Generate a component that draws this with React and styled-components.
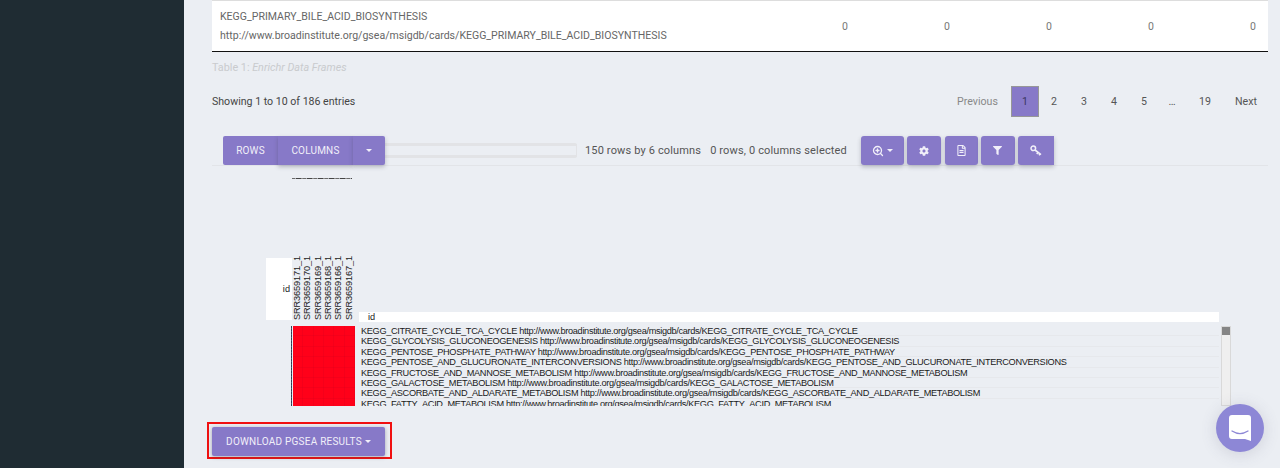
import React from 'react';
import styled, { createGlobalStyle } from 'styled-components';
import { FaCog, FaRegFileAlt, FaFilter } from 'react-icons/fa';
import { ZoomIn } from 'lucide-react';

const GlobalStyle = createGlobalStyle`
  html, body {
    margin: 0;
    padding: 0;
    height: 468px;
    overflow: hidden;
    background: #ebeef3;
  }
`;

const Page = styled.div`
  display: flex;
  width: 1280px;
  height: 468px;
  overflow: hidden;
  font-family: Roboto, "Liberation Sans", sans-serif;
  background: #ebeef3;
`;

const Sidebar = styled.aside`
  flex: 0 0 184px;
  background: #1f2c33;
`;

const Main = styled.main`
  flex: 1;
  padding: 0 12px 0 28px;
  min-width: 0;
`;

const TableRow = styled.div`
  display: flex;
  align-items: center;
  height: 50px;
  background: #fff;
  border-top: 1px solid #ddd;
  border-bottom: 1px solid #111;
  padding: 0 12px 0 8px;
`;

const RowName = styled.div`
  flex: 1;
  padding-top: 1px;
  font-size: 10.55px;
  line-height: 18.5px;
  color: #666;
`;

const ZeroCell = styled.div`
  width: 102px;
  text-align: right;
  font-size: 10.5px;
  color: #777;
`;

const Caption = styled.div`
  margin-top: 10px;
  height: 12px;
  line-height: 12px;
  font-size: 10.8px;
  color: #c9cbce;

  em {
    font-style: italic;
  }
`;

const TableFooter = styled.div`
  display: flex;
  align-items: center;
  justify-content: space-between;
  margin-top: 12px;
  height: 31px;
`;

const Showing = styled.div`
  font-size: 10.6px;
  color: #444;
`;

const Pagination = styled.div`
  display: flex;
  align-items: center;
  height: 31px;
  margin-right: 1px;
  font-size: 10.6px;
  color: #555;
`;

const PageLink = styled.span`
  display: flex;
  align-items: center;
  justify-content: center;
  box-sizing: border-box;
  height: 31px;
  width: ${(p) => p.$width || 30}px;
  color: ${(p) => (p.$muted ? '#888' : p.$active ? '#3b3560' : '#555')};
  background: ${(p) => (p.$active ? '#8779c8' : 'transparent')};
  border: ${(p) => (p.$active ? '1px solid #979797' : 'none')};
`;

const Toolbar = styled.div`
  display: flex;
  align-items: center;
  height: 29px;
  margin-top: 19px;
  padding-left: 11px;
  border-bottom: 1px solid #e2e4e8;
`;

const ToolbarGroup = styled.div`
  display: flex;
  position: relative;
  z-index: 1;
  height: 29px;
`;

const ToolButton = styled.div`
  display: flex;
  align-items: center;
  justify-content: center;
  gap: 2px;
  box-sizing: border-box;
  width: ${(p) => p.$width}px;
  height: 29px;
  margin-right: ${(p) => p.$gap || 0}px;
  background: #8779c8;
  color: #f1eff9;
  font-size: 10px;
  letter-spacing: 0.2px;
  border-radius: ${(p) => p.$radius || '3px'};
  box-shadow: ${(p) => (p.$flat ? 'none' : '0 2px 4px rgba(60, 60, 80, 0.3)')};

  svg {
    display: block;
  }
`;

const Caret = styled.span`
  display: inline-block;
  width: 0;
  height: 0;
  margin-left: ${(p) => p.$left || 0}px;
  border-left: 3.5px solid transparent;
  border-right: 3.5px solid transparent;
  border-top: 3.5px solid #f1eff9;
`;

const ProgressTrack = styled.div`
  width: 192px;
  height: 15px;
  box-sizing: border-box;
  background: #ebeef3;
  border: 1px solid #e2e3e6;
  border-top-width: 3px;
  border-bottom-width: 3px;
  border-left: none;
  border-radius: 0 2px 2px 0;
`;

const Stat = styled.span`
  font-size: 11px;
  letter-spacing: 0.15px;
  color: #555;
  margin-left: ${(p) => p.$left}px;
  white-space: nowrap;
`;

const ToolIcons = styled.div`
  display: flex;
  margin-left: 14px;
`;

const DashLine = styled.div`
  width: 60px;
  height: 1px;
  margin: 12px 0 0 80px;
  background: repeating-linear-gradient(90deg, #6a6a6a 0 3px, #a9adb2 3px 4px, #444 4px 9px, #8a8a8a 9px 11px);
`;

const Heatmap = styled.div`
  display: grid;
  grid-template-columns: 26px 67px 860px 12px;
  grid-template-rows: 54px 14px 80px;
  margin: 79px 0 0 54px;
`;

const CornerLabel = styled.div`
  grid-row: 1 / 3;
  height: 62px;
  background: #fff;
  display: flex;
  align-items: center;
  justify-content: flex-end;
  padding-right: 2px;
  font-family: "Liberation Sans", sans-serif;
  font-size: 9.2px;
  color: #222;
`;

const ColumnLabels = styled.div`
  grid-row: 1 / 3;
  display: flex;
  height: 62px;
  width: 62px;
`;

const ColumnLabel = styled.div`
  width: 10.33px;
  writing-mode: vertical-rl;
  transform: rotate(180deg);
  font-family: "Liberation Sans", sans-serif;
  font-size: 9.2px;
  letter-spacing: -0.12px;
  line-height: 10.33px;
  color: #222;
  white-space: nowrap;
`;

const IdHeader = styled.div`
  grid-row: 1 / 3;
  align-self: end;
  height: 10px;
  margin-bottom: 4px;
  padding-left: 9px;
  background: #fff;
  font-family: "Liberation Sans", sans-serif;
  font-size: 9.2px;
  line-height: 10px;
  color: #222;
`;

const HeaderSpacer = styled.div`
  grid-row: 1 / 3;
`;

const HeatCell = styled.div`
  grid-column: 1 / 3;
  display: flex;
  height: 80px;
  padding-left: 25px;
`;

const HeatBar = styled.div`
  width: 1px;
  height: 80px;
  margin-right: 1px;
  background: repeating-linear-gradient(180deg, #2f3c55 0 2px, #4a5673 2px 3px);
`;

const HeatBlock = styled.div`
  width: 62px;
  height: 80px;
  background-color: #ff0019;
  background-image:
    repeating-linear-gradient(90deg, transparent 0 9.3px, rgba(200, 0, 30, 0.18) 9.3px 10.33px),
    repeating-linear-gradient(180deg, transparent 0 9.4px, rgba(200, 0, 30, 0.18) 9.4px 10.4px);
`;

const RowList = styled.div`
  height: 80px;
  overflow: hidden;
  padding-left: 2px;
`;

const RowEntry = styled.div`
  height: 10.4px;
  line-height: 10.4px;
  box-sizing: border-box;
  border-bottom: 1px solid #e6e8ec;
  font-family: "Liberation Sans", sans-serif;
  font-size: 9.2px;
  letter-spacing: -0.33px;
  color: #1a1a1a;
  white-space: nowrap;
`;

const ScrollTrack = styled.div`
  box-sizing: border-box;
  width: 10px;
  height: 80px;
  margin-left: 2px;
  background: #efefef;
  border: 1px solid #d9d9d9;
`;

const ScrollThumb = styled.div`
  height: 8px;
  background: #858585;
`;

const DownloadOutline = styled.div`
  display: inline-block;
  box-sizing: border-box;
  margin: 16px 0 0 -5px;
  padding: 3px 5px 1px 3px;
  border: 2px solid #f01010;
`;

const DownloadButton = styled.div`
  display: flex;
  align-items: center;
  justify-content: center;
  width: 173px;
  height: 29px;
  background: #8779c8;
  color: #f1eff9;
  font-size: 10px;
  letter-spacing: 0.23px;
  border-radius: 2px;
  box-shadow: 0 1px 4px rgba(60, 60, 80, 0.4);
`;

const ChatBubble = styled.div`
  position: absolute;
  left: 1216px;
  top: 404px;
  width: 48px;
  height: 48px;
  border-radius: 50%;
  background: #8d87d6;
  display: flex;
  align-items: center;
  justify-content: center;
  box-shadow: 0 2px 16px rgba(80, 80, 110, 0.18);
`;

const KeyIcon = () => (
  <svg width="12" height="11" viewBox="0 0 12 11" fill="none" stroke="currentColor">
    <circle cx="3.3" cy="3.3" r="2.3" strokeWidth="1.5" />
    <path d="M5 5l6 4.6M8 7.3l-1.2 1.6M10 8.8l-1 1.4" strokeWidth="1.6" />
  </svg>
);

const zeros = [0, 0, 0, 0, 0];
const samples = ['SRR3659171_1', 'SRR3659170_1', 'SRR3659169_1', 'SRR3659168_1', 'SRR3659166_1', 'SRR3659167_1'];
const pathways = [
  'KEGG_CITRATE_CYCLE_TCA_CYCLE',
  'KEGG_GLYCOLYSIS_GLUCONEOGENESIS',
  'KEGG_PENTOSE_PHOSPHATE_PATHWAY',
  'KEGG_PENTOSE_AND_GLUCURONATE_INTERCONVERSIONS',
  'KEGG_FRUCTOSE_AND_MANNOSE_METABOLISM',
  'KEGG_GALACTOSE_METABOLISM',
  'KEGG_ASCORBATE_AND_ALDARATE_METABOLISM',
  'KEGG_FATTY_ACID_METABOLISM',
];
const msigdb = 'http://www.broadinstitute.org/gsea/msigdb/cards/';

export default function App() {
  return (
    <Page>
      <GlobalStyle />
      <Sidebar />
      <Main>
        <TableRow>
          <RowName>
            <div>KEGG_PRIMARY_BILE_ACID_BIOSYNTHESIS</div>
            <div>{msigdb}KEGG_PRIMARY_BILE_ACID_BIOSYNTHESIS</div>
          </RowName>
          {zeros.map((z, i) => <ZeroCell key={i}>{z}</ZeroCell>)}
        </TableRow>
        <Caption>Table 1: <em>Enrichr Data Frames</em></Caption>
        <TableFooter>
          <Showing>Showing 1 to 10 of 186 entries</Showing>
          <Pagination>
            <PageLink $muted $width={67}>Previous</PageLink>
            <PageLink $active $width={28}>1</PageLink>
            <PageLink>2</PageLink>
            <PageLink>3</PageLink>
            <PageLink>4</PageLink>
            <PageLink>5</PageLink>
            <PageLink $width={26}>…</PageLink>
            <PageLink $width={40}>19</PageLink>
            <PageLink $width={42}>Next</PageLink>
          </Pagination>
        </TableFooter>
        <Toolbar>
          <ToolbarGroup>
            <ToolButton $width={55} $flat $radius="2px 0 0 2px">ROWS</ToolButton>
            <ToolButton $width={75} $radius="0">COLUMNS</ToolButton>
            <ToolButton $width={32} $radius="0 2px 2px 0"><Caret /></ToolButton>
          </ToolbarGroup>
          <ProgressTrack />
          <Stat $left={8}>150 rows by 6 columns</Stat>
          <Stat $left={9}>0 rows, 0 columns selected</Stat>
          <ToolIcons>
            <ToolButton $width={43} $gap={3}><ZoomIn size={12} strokeWidth={2.6} /><Caret $left={1} /></ToolButton>
            <ToolButton $width={34} $gap={4}><FaCog size={10} /></ToolButton>
            <ToolButton $width={33} $gap={3}><FaRegFileAlt size={11} /></ToolButton>
            <ToolButton $width={34} $gap={3}><FaFilter size={9} /></ToolButton>
            <ToolButton $width={36} $radius="3px 0 0 3px"><KeyIcon /></ToolButton>
          </ToolIcons>
        </Toolbar>
        <DashLine />
        <Heatmap>
          <CornerLabel>id</CornerLabel>
          <ColumnLabels>
            {samples.map((s) => <ColumnLabel key={s}>{s}</ColumnLabel>)}
          </ColumnLabels>
          <IdHeader>id</IdHeader>
          <HeaderSpacer />
          <HeatCell>
            <HeatBar />
            <HeatBlock />
          </HeatCell>
          <RowList>
            {pathways.map((p) => <RowEntry key={p}>{p} {msigdb}{p}</RowEntry>)}
          </RowList>
          <ScrollTrack><ScrollThumb /></ScrollTrack>
        </Heatmap>
        <DownloadOutline>
          <DownloadButton>DOWNLOAD PGSEA RESULTS<Caret $left={3} /></DownloadButton>
        </DownloadOutline>
      </Main>
      <ChatBubble>
        <svg width="22" height="26" viewBox="0 0 22 26">
          <path d="M3 0h16a3 3 0 0 1 3 3v23l-6-2H3a3 3 0 0 1-3-3V3a3 3 0 0 1 3-3z" fill="#fff" />
          <path d="M3 16c5 3.2 11 3.2 16 0" fill="none" stroke="#8d87d6" strokeWidth="1.3" strokeLinecap="round" />
        </svg>
      </ChatBubble>
    </Page>
  );
}
